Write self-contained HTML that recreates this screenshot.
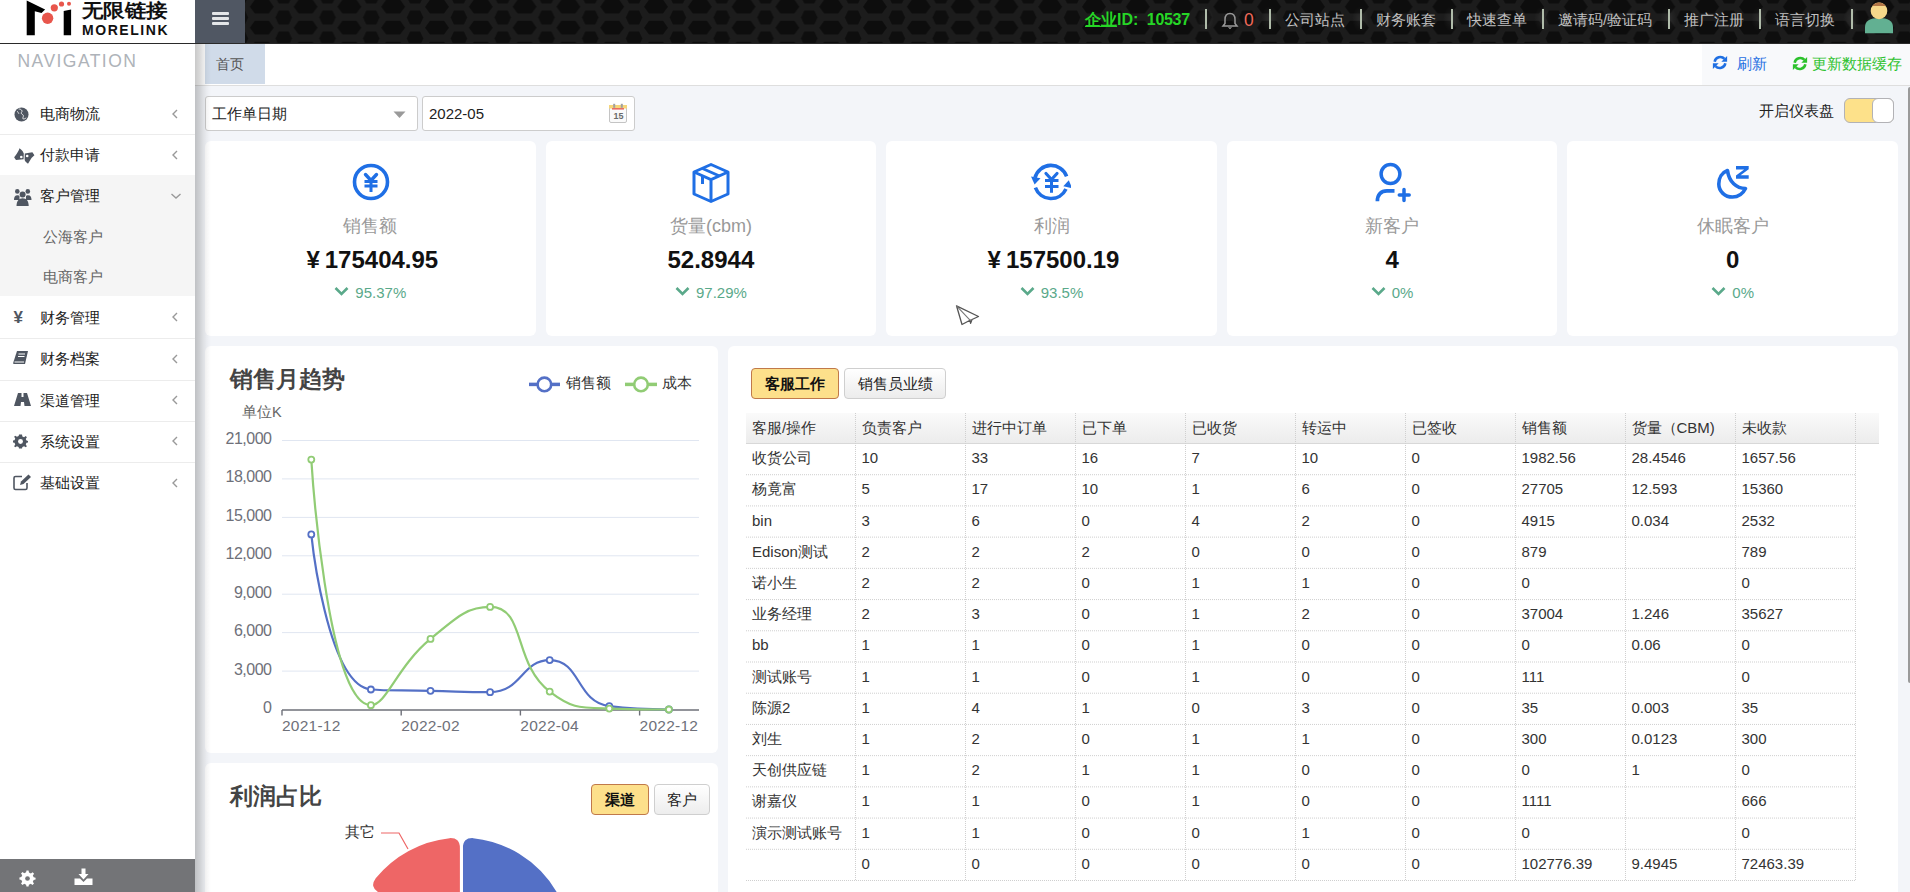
<!DOCTYPE html><html><head><meta charset="utf-8"><title>dashboard</title><style>
*{box-sizing:border-box;margin:0;padding:0}
html,body{width:1910px;height:892px;overflow:hidden}
body{font-family:"Liberation Sans",sans-serif;background:#f3f5f9;position:relative;color:#333}
.a{position:absolute}
.t{position:absolute;white-space:nowrap;line-height:1}
</style></head><body>
<div class="a" style="left:0;top:0;width:1910px;height:44px;background:#141414;border-bottom:1px solid #2a2a2a"></div>
<svg class="a" style="left:245px;top:0" width="1665" height="43">
<defs><pattern id="hx" x="-5.1" y="0" width="43.8" height="21" patternUnits="userSpaceOnUse">
<rect width="43.8" height="21" fill="#1c1c1c"/>
<polygon points="9.9,6.7 14.9,-0.3 28.9,-0.3 33.9,6.7 28.9,13.5 14.9,13.5" fill="#0d0d0d"/>
<polygon points="9.9,27.7 14.9,20.7 28.9,20.7 33.9,27.7 28.9,34.5 14.9,34.5" fill="#0d0d0d"/>
<polygon points="-8.3,17.6 -5,10.6 5,10.6 8.3,17.6 5,24.6 -5,24.6" fill="#0e0e0e"/>
<polygon points="35.5,17.6 38.8,10.6 48.8,10.6 52.1,17.6 48.8,24.6 38.8,24.6" fill="#0e0e0e"/>
<polygon points="-8.3,-3.4 -5,-10.4 5,-10.4 8.3,-3.4 5,3.6 -5,3.6" fill="#0e0e0e"/>
<polygon points="35.5,-3.4 38.8,-10.4 48.8,-10.4 52.1,-3.4 48.8,3.6 38.8,3.6" fill="#0e0e0e"/>
</pattern></defs>
<rect width="1665" height="43" fill="url(#hx)"/></svg>
<div class="a" style="left:0;top:0;width:195px;height:43px;background:#fff"></div>
<svg class="a" style="left:0;top:0" width="195" height="43">
<path d="M26.7 0.5 L45.1 9.6 L41.5 13 L34.8 11.2 L34.8 35.2 L26.7 35.2 Z" fill="#000"/>
<path d="M63.7 11 L71.1 9.4 L71.1 35.2 L63.7 35.2 Z" fill="#000"/>
<circle cx="47.6" cy="18.2" r="5.7" fill="#e8564c"/>
<circle cx="54.3" cy="7.8" r="3.6" fill="#e8564c"/>
<circle cx="61.5" cy="4" r="2.6" fill="#e8564c"/>
<circle cx="69" cy="3.8" r="2" fill="#e8564c"/>
</svg>
<div class="t" style="left:82px;top:1px;font-size:19px;font-weight:bold;color:#111;transform:scaleX(1.13);transform-origin:0 0">无限链接</div>
<div class="t" style="left:82px;top:23px;font-size:14px;font-weight:bold;color:#111;letter-spacing:1.55px">MORELINK</div>
<div class="a" style="left:195px;top:0;width:50px;height:43px;background:#505763"></div>
<div class="a" style="left:212px;top:12px;width:17px;height:3px;background:#e4e6e8;border-radius:1px"></div>
<div class="a" style="left:212px;top:17px;width:17px;height:3px;background:#e4e6e8;border-radius:1px"></div>
<div class="a" style="left:212px;top:22px;width:17px;height:3px;background:#e4e6e8;border-radius:1px"></div>
<div class="t" style="left:1085px;top:12px;font-size:16px;font-weight:bold;color:#26d626"><span style="text-decoration:underline">企业</span>ID: <span style="margin-left:4px;letter-spacing:-0.3px">10537</span></div>
<div class="a" style="left:1197px;top:6px;width:17px;height:26px;background:radial-gradient(ellipse at center,rgba(255,255,255,0.07),rgba(255,255,255,0) 70%)"></div><div class="a" style="left:1205px;top:9px;width:1.5px;height:20px;background:#b0bcaa"></div>
<div class="a" style="left:1261px;top:6px;width:17px;height:26px;background:radial-gradient(ellipse at center,rgba(255,255,255,0.07),rgba(255,255,255,0) 70%)"></div><div class="a" style="left:1269px;top:9px;width:1.5px;height:20px;background:#b0bcaa"></div>
<div class="a" style="left:1352px;top:6px;width:17px;height:26px;background:radial-gradient(ellipse at center,rgba(255,255,255,0.07),rgba(255,255,255,0) 70%)"></div><div class="a" style="left:1360px;top:9px;width:1.5px;height:20px;background:#b0bcaa"></div>
<div class="a" style="left:1443px;top:6px;width:17px;height:26px;background:radial-gradient(ellipse at center,rgba(255,255,255,0.07),rgba(255,255,255,0) 70%)"></div><div class="a" style="left:1451px;top:9px;width:1.5px;height:20px;background:#b0bcaa"></div>
<div class="a" style="left:1534px;top:6px;width:17px;height:26px;background:radial-gradient(ellipse at center,rgba(255,255,255,0.07),rgba(255,255,255,0) 70%)"></div><div class="a" style="left:1542px;top:9px;width:1.5px;height:20px;background:#b0bcaa"></div>
<div class="a" style="left:1660px;top:6px;width:17px;height:26px;background:radial-gradient(ellipse at center,rgba(255,255,255,0.07),rgba(255,255,255,0) 70%)"></div><div class="a" style="left:1668px;top:9px;width:1.5px;height:20px;background:#b0bcaa"></div>
<div class="a" style="left:1751px;top:6px;width:17px;height:26px;background:radial-gradient(ellipse at center,rgba(255,255,255,0.07),rgba(255,255,255,0) 70%)"></div><div class="a" style="left:1759px;top:9px;width:1.5px;height:20px;background:#b0bcaa"></div>
<div class="a" style="left:1843px;top:6px;width:17px;height:26px;background:radial-gradient(ellipse at center,rgba(255,255,255,0.07),rgba(255,255,255,0) 70%)"></div><div class="a" style="left:1851px;top:9px;width:1.5px;height:20px;background:#b0bcaa"></div>
<svg class="a" style="left:1220px;top:11px" width="20" height="20" viewBox="0 0 20 20">
<path d="M10 2.5 C6.5 2.5 5 5.5 5 8.5 L5 12.5 L3 15 L17 15 L15 12.5 L15 8.5 C15 5.5 13.5 2.5 10 2.5 Z" fill="none" stroke="#999" stroke-width="1.5"/>
<path d="M8.5 16.5 Q10 18.5 11.5 16.5" fill="#999" stroke="#999"/></svg>
<div class="t" style="left:1244px;top:11.5px;font-size:17.5px;color:#f06a5a">0</div>
<div class="t" style="left:1285px;top:12px;font-size:15px;color:#c0c0c0">公司站点</div>
<div class="t" style="left:1376px;top:12px;font-size:15px;color:#c0c0c0">财务账套</div>
<div class="t" style="left:1467px;top:12px;font-size:15px;color:#c0c0c0">快速查单</div>
<div class="t" style="left:1558px;top:12px;font-size:15px;color:#c0c0c0">邀请码/验证码</div>
<div class="t" style="left:1684px;top:12px;font-size:15px;color:#c0c0c0">推广注册</div>
<div class="t" style="left:1775px;top:12px;font-size:15px;color:#c0c0c0">语言切换</div>
<svg class="a" style="left:1862px;top:2px" width="34" height="33" viewBox="0 0 34 33">
<path d="M3 31.2 L3 25 C3 19 8 16 17 16 C26 16 31 19 31 25 L31 31.2 Z" fill="#62b092"/>
<circle cx="17" cy="8.9" r="8.3" fill="#f6d88a"/>
<path d="M10.3 4 A8.3 8.3 0 0 1 23.7 4 Z" fill="#b27546"/>
</svg>
<div class="a" style="left:0;top:44px;width:195px;height:848px;background:#fff"></div>
<div class="t" style="left:17.5px;top:52.5px;font-size:17.5px;color:#aeb3b9;letter-spacing:1.45px">NAVIGATION</div>
<div class="a" style="left:0;top:175px;width:195px;height:121px;background:#f5f5f5"></div>
<div class="t" style="left:40px;top:106.0px;font-size:15px;color:#222">电商物流</div>
<svg class="a" style="left:171px;top:108.5px" width="8" height="10"><path d="M6 1 L2 5 L6 9" fill="none" stroke="#999" stroke-width="1.4"/></svg>
<div class="a" style="left:0;top:134px;width:195px;height:1px;background:#ececec"></div>
<div class="t" style="left:40px;top:147.0px;font-size:15px;color:#222">付款申请</div>
<svg class="a" style="left:171px;top:149.5px" width="8" height="10"><path d="M6 1 L2 5 L6 9" fill="none" stroke="#999" stroke-width="1.4"/></svg>
<div class="t" style="left:40px;top:188.0px;font-size:15px;color:#222">客户管理</div>
<svg class="a" style="left:170px;top:191.5px" width="12" height="8"><path d="M1.5 2 L6 6 L10.5 2" fill="none" stroke="#999" stroke-width="1.4"/></svg>
<div class="t" style="left:40px;top:309.5px;font-size:15px;color:#222">财务管理</div>
<svg class="a" style="left:171px;top:312.0px" width="8" height="10"><path d="M6 1 L2 5 L6 9" fill="none" stroke="#999" stroke-width="1.4"/></svg>
<div class="a" style="left:0;top:338px;width:195px;height:1px;background:#ececec"></div>
<div class="t" style="left:40px;top:351.25px;font-size:15px;color:#222">财务档案</div>
<svg class="a" style="left:171px;top:353.75px" width="8" height="10"><path d="M6 1 L2 5 L6 9" fill="none" stroke="#999" stroke-width="1.4"/></svg>
<div class="a" style="left:0;top:379.5px;width:195px;height:1px;background:#ececec"></div>
<div class="t" style="left:40px;top:392.5px;font-size:15px;color:#222">渠道管理</div>
<svg class="a" style="left:171px;top:395.0px" width="8" height="10"><path d="M6 1 L2 5 L6 9" fill="none" stroke="#999" stroke-width="1.4"/></svg>
<div class="a" style="left:0;top:420.5px;width:195px;height:1px;background:#ececec"></div>
<div class="t" style="left:40px;top:433.75px;font-size:15px;color:#222">系统设置</div>
<svg class="a" style="left:171px;top:436.25px" width="8" height="10"><path d="M6 1 L2 5 L6 9" fill="none" stroke="#999" stroke-width="1.4"/></svg>
<div class="a" style="left:0;top:462px;width:195px;height:1px;background:#ececec"></div>
<div class="t" style="left:40px;top:475.0px;font-size:15px;color:#222">基础设置</div>
<svg class="a" style="left:171px;top:477.5px" width="8" height="10"><path d="M6 1 L2 5 L6 9" fill="none" stroke="#999" stroke-width="1.4"/></svg>
<div class="t" style="left:43px;top:229.0px;font-size:15px;color:#666">公海客户</div>
<div class="t" style="left:43px;top:269.0px;font-size:15px;color:#666">电商客户</div>
<div class="a" style="left:0;top:134px;width:195px;height:1px;background:#ececec"></div>
<svg class="a" style="left:14px;top:107px" width="15" height="15" viewBox="0 0 16 16">
<circle cx="8" cy="8" r="7.5" fill="#4f5661"/>
<path d="M5 2.2 C6.5 2 8 2.8 8.5 4 C9 5 7.5 5.5 7.8 6.8 C8.2 8 9.8 7.8 10 9.2 C10.2 10.5 9 11.5 9.5 12.5 C10.5 13 12 12.5 13 11.5" fill="none" stroke="#fff" stroke-width="0.9"/>
<path d="M3.5 4.5 C4.5 5 4.2 6.5 5.2 7.2" fill="none" stroke="#fff" stroke-width="0.9"/>
</svg>
<svg class="a" style="left:13px;top:146px" width="22" height="19" viewBox="0 0 22 19">
<path d="M1.2 11.6 C2.5 9 5 7 6.5 2.3 L8 3.5 L9.5 5 L10.8 7.6 L10.6 13.2 L3 14 Z" fill="#4f5661"/>
<path d="M11.8 7.6 L19.4 6.2 L21.4 9.3 L18.5 12 L15 17.7 L13.5 16.5 L12 15 L11.6 13.2 Z" fill="#4f5661"/>
<circle cx="8.3" cy="11" r="1.3" fill="#fff"/><circle cx="14.2" cy="10" r="1.3" fill="#fff"/>
</svg>
<svg class="a" style="left:13px;top:188px" width="20" height="20" viewBox="0 0 20 20">
<circle cx="4.3" cy="3.4" r="2.3" fill="#4f5661"/><circle cx="14.8" cy="3.4" r="2.3" fill="#4f5661"/>
<circle cx="9.6" cy="6.5" r="3" fill="#4f5661"/>
<path d="M1 12 C1 9 2 7.2 4.5 7.2 C5.5 7.2 6 7.6 6.5 8 L6.5 12 Z" fill="#4f5661"/>
<path d="M18.5 12 C18.5 9 17.5 7.2 15 7.2 C14 7.2 13.5 7.6 13 8 L13 12 Z" fill="#4f5661"/>
<path d="M3.5 18 C3.5 13 6 10.3 9.7 10.3 C13.4 10.3 15.7 13 15.7 18 Z" fill="#4f5661"/>
</svg>
<div class="t" style="left:13.5px;top:309px;font-size:17px;font-weight:bold;color:#4f5661">¥</div>
<svg class="a" style="left:13px;top:350px" width="16" height="15" viewBox="0 0 16 15">
<path d="M4 1 L15 1 L12 14 L1 14 C0.5 14 0 13.5 0.3 12.5 Z" fill="#4f5661"/>
<path d="M5.5 4 L12 4 M5 6.5 L11.5 6.5" stroke="#fff" stroke-width="1.2"/>
<path d="M1.5 12 L11 12" stroke="#fff" stroke-width="1"/>
</svg>
<svg class="a" style="left:14px;top:393px" width="17" height="14" viewBox="0 0 17 14">
<path d="M4 0 L7.5 0 L7.5 4 L9.5 4 L9.5 0 L13 0 L17 13 L10.5 13 L10 9 L7 9 L6.5 13 L0 13 Z" fill="#4f5661"/>
</svg>
<svg class="a" style="left:13px;top:434px" width="15" height="15" viewBox="0 0 16 16">
<path d="M8 0.5 L9.6 0.5 L10 2.6 L11.8 3.4 L13.6 2.2 L14.8 3.4 L13.6 5.2 L14.4 7 L16 7.4 L16 9 L14.4 9.4 L13.6 11.2 L14.8 13 L13.6 14.2 L11.8 13 L10 13.8 L9.6 15.5 L6.4 15.5 L6 13.8 L4.2 13 L2.4 14.2 L1.2 13 L2.4 11.2 L1.6 9.4 L0 9 L0 7 L1.6 6.6 L2.4 4.8 L1.2 3 L2.4 1.8 L4.2 3 L6 2.2 L6.4 0.5 Z" fill="#4f5661"/>
<circle cx="8" cy="8" r="2.6" fill="#fff"/></svg>
<svg class="a" style="left:13px;top:474px" width="19" height="17" viewBox="0 0 19 17">
<path d="M9 2.5 L2.5 2.5 C1.5 2.5 1 3 1 4 L1 14 C1 15 1.5 15.5 2.5 15.5 L12.5 15.5 C13.5 15.5 14 15 14 14 L14 9" fill="none" stroke="#4f5661" stroke-width="1.6"/>
<path d="M7 11 L8 7.5 L15.5 0.5 L18 3 L10.5 10 Z" fill="#4f5661"/>
</svg>
<div class="a" style="left:0;top:859px;width:195px;height:33px;background:#737477"></div>
<svg class="a" style="left:19px;top:870px" width="17" height="17" viewBox="0 0 16 16">
<path d="M7 0.5 L9 0.5 L9.4 2.4 L11.2 3.2 L12.8 2.1 L14.2 3.5 L13 5.1 L13.8 6.9 L15.6 7.2 L15.6 9 L13.8 9.3 L13 11.1 L14.1 12.7 L12.7 14.1 L11.1 13 L9.3 13.8 L9 15.6 L7 15.6 L6.7 13.8 L4.9 13 L3.3 14.1 L1.9 12.7 L3 11.1 L2.2 9.3 L0.4 9 L0.4 7 L2.2 6.7 L3 4.9 L1.9 3.3 L3.3 1.9 L4.9 3 L6.7 2.2 Z" fill="#fff"/>
<circle cx="8" cy="8" r="2.2" fill="#737477"/></svg>
<svg class="a" style="left:74px;top:868px" width="19" height="18" viewBox="0 0 19 18">
<path d="M7.5 0.5 L11.5 0.5 L11.5 6 L14.5 6 L9.5 11.5 L4.5 6 L7.5 6 Z" fill="#fff"/>
<path d="M0.5 10.5 L6 10.5 L9.5 14 L13 10.5 L18.5 10.5 L18.5 17 L0.5 17 Z" fill="#fff"/>
</svg>
<div class="a" style="left:195px;top:44px;width:1715px;height:42px;background:#fff;border-bottom:1px solid #dedede"></div>
<div class="a" style="left:1702px;top:44px;width:208px;height:41px;background:#f8f9fb"></div>
<div class="a" style="left:205px;top:44px;width:60px;height:40px;background:#d0dbe9"></div>
<div class="t" style="left:216px;top:57px;font-size:14px;color:#555">首页</div>
<svg class="a" style="left:1712px;top:55px" width="16" height="15" viewBox="0 0 16 16">
<path d="M2.3 7.2 A6 6 0 0 1 12.8 4.2" fill="none" stroke="#1f6fe2" stroke-width="2.7"/>
<path d="M15.6 1 L15.6 7.2 L9.4 7.2 Z" fill="#1f6fe2"/>
<path d="M13.7 8.8 A6 6 0 0 1 3.2 11.8" fill="none" stroke="#1f6fe2" stroke-width="2.7"/>
<path d="M0.4 15 L0.4 8.8 L6.6 8.8 Z" fill="#1f6fe2"/></svg>
<div class="t" style="left:1737px;top:56px;font-size:15px;color:#1f6fe2">刷新</div>
<svg class="a" style="left:1792px;top:56px" width="16" height="15" viewBox="0 0 16 16">
<path d="M2.3 7.2 A6 6 0 0 1 12.8 4.2" fill="none" stroke="#2cc12c" stroke-width="2.7"/>
<path d="M15.6 1 L15.6 7.2 L9.4 7.2 Z" fill="#2cc12c"/>
<path d="M13.7 8.8 A6 6 0 0 1 3.2 11.8" fill="none" stroke="#2cc12c" stroke-width="2.7"/>
<path d="M0.4 15 L0.4 8.8 L6.6 8.8 Z" fill="#2cc12c"/></svg>
<div class="t" style="left:1812px;top:56px;font-size:15px;color:#2fc22f">更新数据缓存</div>
<div class="a" style="left:1908px;top:87px;width:4px;height:596px;background:#9a9a9a;border-radius:3px"></div>
<div class="a" style="left:205px;top:96px;width:213px;height:35px;background:#fff;border:1px solid #ccc;border-radius:3px"></div>
<div class="t" style="left:212px;top:106px;font-size:15px;color:#222">工作单日期</div>
<svg class="a" style="left:393px;top:111px" width="13" height="8"><path d="M0.5 0.5 L12.5 0.5 L6.5 7 Z" fill="#9a9a9a"/></svg>
<div class="a" style="left:422px;top:96px;width:213px;height:35px;background:#fff;border:1px solid #ccc;border-radius:3px"></div>
<div class="t" style="left:429px;top:106px;font-size:15px;color:#222">2022-05</div>
<svg class="a" style="left:609px;top:103px" width="19" height="21" viewBox="0 0 19 21">
<rect x="0.5" y="2.5" width="17" height="17" rx="1.5" fill="#fafafa" stroke="#c4c4c4"/>
<rect x="0" y="2" width="18" height="3.5" fill="#f6d67a"/>
<rect x="3" y="5.2" width="12" height="1.3" fill="#e8504a"/>
<rect x="4.2" y="0.8" width="2" height="4" fill="#a0a0a0"/><rect x="11.8" y="0.8" width="2" height="4" fill="#a0a0a0"/>
<text x="4.6" y="15.5" font-size="9" font-weight="bold" font-family="Liberation Sans" fill="#6a6a6a">15</text></svg>
<div class="t" style="left:1759px;top:103px;font-size:15px;color:#222">开启仪表盘</div>
<div class="a" style="left:1844px;top:98px;width:50px;height:25px;background:#fde18a;border:1px solid #b2b2b6;border-radius:6px"></div>
<div class="a" style="left:1872px;top:98px;width:22px;height:25px;background:#fff;border:1px solid #b2b2b6;border-radius:6px"></div>
<div class="a" style="left:205.00px;top:141px;width:330.60px;height:195px;background:#fff;border-radius:6px"></div>
<svg class="a" style="left:350.5px;top:162px" width="40" height="42" viewBox="0 0 40 42"><circle cx="20" cy="20" r="16.5" fill="none" stroke="#1f6fe5" stroke-width="3.6"/>
 <path d="M14.5 12.5 L20 18.5 L25.5 12.5" fill="none" stroke="#1f6fe5" stroke-width="3.4" stroke-linecap="round"/>
 <path d="M13.5 19.5 L26.5 19.5 M13.5 24 L26.5 24 M20 18 L20 30" stroke="#1f6fe5" stroke-width="3"/></svg>
<div class="t" style="left:220.30px;width:300px;text-align:center;top:217px;font-size:18px;color:#999">销售额</div>
<div class="t" style="left:222.30px;width:300px;text-align:center;top:248px;font-size:24px;font-weight:bold;color:#111"><span style="margin-right:5px">¥</span>175404.95</div>
<div class="t" style="left:220.30px;width:300px;text-align:center;top:285px;font-size:15px;color:#5aa98a"><svg width="15" height="10" style="vertical-align:top;margin-right:6px;margin-top:1px"><path d="M1.5 2 L7.5 8 L13.5 2" fill="none" stroke="#5aa98a" stroke-width="2.6"/></svg>95.37%</div>
<div class="a" style="left:545.60px;top:141px;width:330.60px;height:195px;background:#fff;border-radius:6px"></div>
<svg class="a" style="left:690.5px;top:162px" width="40" height="42" viewBox="0 0 40 42"><path d="M20 2.5 L37 10 L37 32 L20 39.5 L3 32 L3 10 Z" fill="none" stroke="#1f6fe5" stroke-width="3" stroke-linejoin="round"/>
 <path d="M3 10 L20 17.5 L37 10 M20 17.5 L20 39.5" fill="none" stroke="#1f6fe5" stroke-width="3"/>
 <path d="M11.5 6.5 L28.5 14 M11.5 14 L11.5 22" fill="none" stroke="#1f6fe5" stroke-width="3"/></svg>
<div class="t" style="left:560.90px;width:300px;text-align:center;top:217px;font-size:18px;color:#999">货量(cbm)</div>
<div class="t" style="left:560.90px;width:300px;text-align:center;top:248px;font-size:24px;font-weight:bold;color:#111">52.8944</div>
<div class="t" style="left:560.90px;width:300px;text-align:center;top:285px;font-size:15px;color:#5aa98a"><svg width="15" height="10" style="vertical-align:top;margin-right:6px;margin-top:1px"><path d="M1.5 2 L7.5 8 L13.5 2" fill="none" stroke="#5aa98a" stroke-width="2.6"/></svg>97.29%</div>
<div class="a" style="left:886.20px;top:141px;width:330.60px;height:195px;background:#fff;border-radius:6px"></div>
<svg class="a" style="left:1031px;top:162px" width="40" height="42" viewBox="0 0 40 42"><path d="M3.97 15.7 A16.6 16.6 0 0 1 35.6 14.3" fill="none" stroke="#1f6fe5" stroke-width="3.6"/>
 <path d="M0 14.5 L9.5 16.3 L3.6 22.5 Z" fill="#1f6fe5"/>
 <path d="M35 27 A16.6 16.6 0 0 1 4.4 25.7" fill="none" stroke="#1f6fe5" stroke-width="3.6"/>
 <path d="M37.8 18.3 L41.2 26.3 L32.3 24.2 Z" fill="#1f6fe5"/>
 <path d="M15 11.5 L20.5 17.5 L26 11.5" fill="none" stroke="#1f6fe5" stroke-width="3.2" stroke-linecap="round"/>
 <path d="M14 18.5 L27.5 18.5 M14 24.4 L27.5 24.4 M20.5 17 L20.5 30.8" stroke="#1f6fe5" stroke-width="3"/></svg>
<div class="t" style="left:901.50px;width:300px;text-align:center;top:217px;font-size:18px;color:#999">利润</div>
<div class="t" style="left:903.50px;width:300px;text-align:center;top:248px;font-size:24px;font-weight:bold;color:#111"><span style="margin-right:5px">¥</span>157500.19</div>
<div class="t" style="left:901.50px;width:300px;text-align:center;top:285px;font-size:15px;color:#5aa98a"><svg width="15" height="10" style="vertical-align:top;margin-right:6px;margin-top:1px"><path d="M1.5 2 L7.5 8 L13.5 2" fill="none" stroke="#5aa98a" stroke-width="2.6"/></svg>93.5%</div>
<div class="a" style="left:1226.80px;top:141px;width:330.60px;height:195px;background:#fff;border-radius:6px"></div>
<svg class="a" style="left:1371.5px;top:162px" width="40" height="42" viewBox="0 0 40 42"><circle cx="18.5" cy="12" r="9.4" fill="none" stroke="#1f6fe5" stroke-width="3.5"/>
 <path d="M5.4 39.2 C5.4 32.5 9 28.8 15 28.8 L22.5 28.8" fill="none" stroke="#1f6fe5" stroke-width="3.7"/>
 <path d="M27.3 33 L37.2 33 M32 27.5 L32 38.5" stroke="#1f6fe5" stroke-width="3.5" stroke-linecap="round"/></svg>
<div class="t" style="left:1242.10px;width:300px;text-align:center;top:217px;font-size:18px;color:#999">新客户</div>
<div class="t" style="left:1242.10px;width:300px;text-align:center;top:248px;font-size:24px;font-weight:bold;color:#111">4</div>
<div class="t" style="left:1242.10px;width:300px;text-align:center;top:285px;font-size:15px;color:#5aa98a"><svg width="15" height="10" style="vertical-align:top;margin-right:6px;margin-top:1px"><path d="M1.5 2 L7.5 8 L13.5 2" fill="none" stroke="#5aa98a" stroke-width="2.6"/></svg>0%</div>
<div class="a" style="left:1567.40px;top:141px;width:330.60px;height:195px;background:#fff;border-radius:6px"></div>
<svg class="a" style="left:1712px;top:162px" width="40" height="42" viewBox="0 0 40 42"><path d="M15.5 8.5 C10 10.5 6.8 16 6.8 22 C6.8 29.5 13 35 20.5 35 C26 35 31 31.5 33.5 26.5 C24.5 26.5 17 20 15.5 8.5 Z" fill="none" stroke="#1f6fe5" stroke-width="3.6" stroke-linejoin="round"/>
 <path d="M24 4 L36.7 4 L36.7 7.3 L28.6 13.3 L36.7 13.3 L36.7 16.7 L24 16.7 L24 13.5 L32.1 7.5 L24 7.5 Z" fill="#1f6fe5"/></svg>
<div class="t" style="left:1582.70px;width:300px;text-align:center;top:217px;font-size:18px;color:#999">休眠客户</div>
<div class="t" style="left:1582.70px;width:300px;text-align:center;top:248px;font-size:24px;font-weight:bold;color:#111">0</div>
<div class="t" style="left:1582.70px;width:300px;text-align:center;top:285px;font-size:15px;color:#5aa98a"><svg width="15" height="10" style="vertical-align:top;margin-right:6px;margin-top:1px"><path d="M1.5 2 L7.5 8 L13.5 2" fill="none" stroke="#5aa98a" stroke-width="2.6"/></svg>0%</div>
<svg class="a" style="left:955px;top:305px" width="25" height="22" viewBox="0 0 25 22">
<path d="M1.5 0.8 L23.5 11.5 L17 14.5 L15.6 18.3 L15 15.2 L7 19.5 Z" fill="#fff" stroke="#555" stroke-width="1.3" stroke-linejoin="round"/>
<path d="M1.5 0.8 L15 15.2 L17 14.5" fill="none" stroke="#777" stroke-width="1.1"/></svg>
<div class="a" style="left:205px;top:346px;width:513px;height:407px;background:#fff;border-radius:6px"></div>
<div class="t" style="left:230px;top:368.5px;font-size:22.5px;font-weight:bold;color:#444">销售月趋势</div>
<svg class="a" style="left:520px;top:370px" width="190" height="30">
<path d="M9 14.4 L40 14.4" stroke="#5470c6" stroke-width="3.5"/>
<circle cx="24.4" cy="14.4" r="6.8" fill="#fff" stroke="#5470c6" stroke-width="2.6"/>
<path d="M105 14.4 L137 14.4" stroke="#91cc75" stroke-width="3.5"/>
<circle cx="121" cy="14.4" r="6.8" fill="#fff" stroke="#91cc75" stroke-width="2.6"/>
</svg>
<div class="t" style="left:566px;top:375px;font-size:15px;color:#333">销售额</div>
<div class="t" style="left:662px;top:375px;font-size:15px;color:#333">成本</div>
<div class="t" style="left:242px;top:405px;font-size:14.5px;color:#666">单位K</div>
<svg class="a" style="left:0;top:0" width="1910" height="892"><path d="M282 440.5 L699 440.5" stroke="#e0e6f1" stroke-width="1"/><path d="M282 478.9 L699 478.9" stroke="#e0e6f1" stroke-width="1"/><path d="M282 517.4 L699 517.4" stroke="#e0e6f1" stroke-width="1"/><path d="M282 555.8 L699 555.8" stroke="#e0e6f1" stroke-width="1"/><path d="M282 594.2 L699 594.2" stroke="#e0e6f1" stroke-width="1"/><path d="M282 632.6 L699 632.6" stroke="#e0e6f1" stroke-width="1"/><path d="M282 671.1 L699 671.1" stroke="#e0e6f1" stroke-width="1"/><path d="M282 710 L699 710" stroke="#6e7079" stroke-width="1.6"/><path d="M282 710 L282 715.5" stroke="#6e7079" stroke-width="1.4"/><path d="M401.2 710 L401.2 715.5" stroke="#6e7079" stroke-width="1.4"/><path d="M520.4 710 L520.4 715.5" stroke="#6e7079" stroke-width="1.4"/><path d="M639.6 710 L639.6 715.5" stroke="#6e7079" stroke-width="1.4"/><path d="M311.30 534.40 C311.30 534.40 327.04 685.88 370.90 689.50 C386.64 690.80 400.70 690.13 430.50 690.80 C460.30 691.48 462.19 692.20 490.10 692.20 C521.79 692.20 521.49 660.10 549.70 660.10 C581.09 660.10 576.04 702.03 609.30 706.20 C635.64 709.50 668.90 709.50 668.90 709.50" fill="none" stroke="#5470c6" stroke-width="2.2"/><circle cx="311.3" cy="534.4" r="3" fill="#fff" stroke="#5470c6" stroke-width="1.8"/><circle cx="370.9" cy="689.5" r="3" fill="#fff" stroke="#5470c6" stroke-width="1.8"/><circle cx="430.5" cy="690.8" r="3" fill="#fff" stroke="#5470c6" stroke-width="1.8"/><circle cx="490.1" cy="692.2" r="3" fill="#fff" stroke="#5470c6" stroke-width="1.8"/><circle cx="549.7" cy="660.1" r="3" fill="#fff" stroke="#5470c6" stroke-width="1.8"/><circle cx="609.3" cy="706.2" r="3" fill="#fff" stroke="#5470c6" stroke-width="1.8"/><circle cx="668.9" cy="709.5" r="3" fill="#fff" stroke="#5470c6" stroke-width="1.8"/><path d="M311.30 459.60 C311.30 459.60 326.84 705.20 370.90 705.20 C386.44 705.20 396.61 666.85 430.50 638.90 C456.21 617.70 466.55 606.90 490.10 606.90 C526.15 606.90 512.41 663.19 549.70 691.60 C572.01 708.60 578.92 707.66 609.30 708.60 C638.52 709.50 668.90 709.50 668.90 709.50" fill="none" stroke="#91cc75" stroke-width="2.2"/><circle cx="311.3" cy="459.6" r="3" fill="#fff" stroke="#91cc75" stroke-width="1.8"/><circle cx="370.9" cy="705.2" r="3" fill="#fff" stroke="#91cc75" stroke-width="1.8"/><circle cx="430.5" cy="638.9" r="3" fill="#fff" stroke="#91cc75" stroke-width="1.8"/><circle cx="490.1" cy="606.9" r="3" fill="#fff" stroke="#91cc75" stroke-width="1.8"/><circle cx="549.7" cy="691.6" r="3" fill="#fff" stroke="#91cc75" stroke-width="1.8"/><circle cx="609.3" cy="708.6" r="3" fill="#fff" stroke="#91cc75" stroke-width="1.8"/><circle cx="668.9" cy="709.5" r="3" fill="#fff" stroke="#91cc75" stroke-width="1.8"/></svg>
<div class="t" style="left:171.5px;width:100px;text-align:right;top:431.0px;font-size:16px;letter-spacing:-0.5px;color:#6e7079">21,000</div>
<div class="t" style="left:171.5px;width:100px;text-align:right;top:469.4px;font-size:16px;letter-spacing:-0.5px;color:#6e7079">18,000</div>
<div class="t" style="left:171.5px;width:100px;text-align:right;top:507.9px;font-size:16px;letter-spacing:-0.5px;color:#6e7079">15,000</div>
<div class="t" style="left:171.5px;width:100px;text-align:right;top:546.3px;font-size:16px;letter-spacing:-0.5px;color:#6e7079">12,000</div>
<div class="t" style="left:171.5px;width:100px;text-align:right;top:584.7px;font-size:16px;letter-spacing:-0.5px;color:#6e7079">9,000</div>
<div class="t" style="left:171.5px;width:100px;text-align:right;top:623.1px;font-size:16px;letter-spacing:-0.5px;color:#6e7079">6,000</div>
<div class="t" style="left:171.5px;width:100px;text-align:right;top:661.6px;font-size:16px;letter-spacing:-0.5px;color:#6e7079">3,000</div>
<div class="t" style="left:171.5px;width:100px;text-align:right;top:700.0px;font-size:16px;letter-spacing:-0.5px;color:#6e7079">0</div>
<div class="t" style="left:261.3px;width:100px;text-align:center;top:718px;font-size:15.5px;letter-spacing:0.25px;color:#6e7079">2021-12</div>
<div class="t" style="left:380.5px;width:100px;text-align:center;top:718px;font-size:15.5px;letter-spacing:0.25px;color:#6e7079">2022-02</div>
<div class="t" style="left:499.7px;width:100px;text-align:center;top:718px;font-size:15.5px;letter-spacing:0.25px;color:#6e7079">2022-04</div>
<div class="t" style="left:618.9px;width:100px;text-align:center;top:718px;font-size:15.5px;letter-spacing:0.25px;color:#6e7079">2022-12</div>
<div class="a" style="left:205px;top:763px;width:513px;height:140px;background:#fff;border-radius:6px"></div>
<div class="t" style="left:230px;top:785.5px;font-size:22.5px;font-weight:bold;color:#444">利润占比</div>
<div class="a" style="left:591px;top:784px;width:58px;height:31px;background:#fde08b;border:1px solid #c0794a;border-radius:4px"></div>
<div class="t" style="left:605px;top:792px;font-size:15px;font-weight:bold;color:#111">渠道</div>
<div class="a" style="left:654px;top:784px;width:56px;height:31px;background:linear-gradient(#fff,#ededed);border:1px solid #cfcfcf;border-radius:4px"></div>
<div class="t" style="left:667px;top:792px;font-size:15px;color:#222">客户</div>
<svg class="a" style="left:0;top:0" width="1910" height="892">
<path d="M461.4 948 L461.40 848.00 Q461.40 836.00 473.38 836.64 A112 112 0 0 1 563.83 993.31 Q558.39 1004.00 548.00 998.00 Z" fill="#5470c6" stroke="#fff" stroke-width="3" stroke-linejoin="round"/>
<path d="M461.4 948 L377.53 893.54 Q367.47 887.00 374.53 877.31 A112 112 0 0 1 449.42 836.64 Q461.40 836.00 461.40 848.00 Z" fill="#ee6666" stroke="#fff" stroke-width="3" stroke-linejoin="round"/>
<path d="M381 833 L399 833 L408 849" fill="none" stroke="#ee6666" stroke-width="1.2"/>
</svg>
<div class="t" style="left:345px;top:824.5px;font-size:14.5px;color:#333">其它</div>
<div class="a" style="left:728px;top:346px;width:1170px;height:560px;background:#fff;border-radius:6px"></div>
<div class="a" style="left:751px;top:368px;width:88px;height:31px;background:#fde08b;border:1px solid #c0794a;border-radius:4px"></div>
<div class="t" style="left:765px;top:376px;font-size:15px;font-weight:bold;color:#111">客服工作</div>
<div class="a" style="left:844px;top:368px;width:102px;height:31px;background:linear-gradient(#fff,#ececec);border:1px solid #cfcfcf;border-radius:4px"></div>
<div class="t" style="left:858px;top:376px;font-size:15px;color:#222">销售员业绩</div>
<div class="a" style="left:746px;top:413px;width:1133px;height:31px;background:linear-gradient(#fafafa,#ececec);border-bottom:1px solid #d8d8d8"></div>
<div class="t" style="left:752.0px;top:420px;font-size:15px;color:#333">客服/操作</div>
<div class="t" style="left:861.5px;top:420px;font-size:15px;color:#333">负责客户</div>
<div class="t" style="left:971.5px;top:420px;font-size:15px;color:#333">进行中订单</div>
<div class="t" style="left:1081.5px;top:420px;font-size:15px;color:#333">已下单</div>
<div class="t" style="left:1191.5px;top:420px;font-size:15px;color:#333">已收货</div>
<div class="t" style="left:1301.5px;top:420px;font-size:15px;color:#333">转运中</div>
<div class="t" style="left:1411.5px;top:420px;font-size:15px;color:#333">已签收</div>
<div class="t" style="left:1521.5px;top:420px;font-size:15px;color:#333">销售额</div>
<div class="t" style="left:1631.5px;top:420px;font-size:15px;color:#333">货量（CBM)</div>
<div class="t" style="left:1741.5px;top:420px;font-size:15px;color:#333">未收款</div>
<svg class="a" style="left:0;top:0" width="1910" height="892"><path d="M855.5 413 L855.5 880.5" stroke="#cfcfcf" stroke-width="1" stroke-dasharray="1 1"/><path d="M965.5 413 L965.5 880.5" stroke="#cfcfcf" stroke-width="1" stroke-dasharray="1 1"/><path d="M1075.5 413 L1075.5 880.5" stroke="#cfcfcf" stroke-width="1" stroke-dasharray="1 1"/><path d="M1185.5 413 L1185.5 880.5" stroke="#cfcfcf" stroke-width="1" stroke-dasharray="1 1"/><path d="M1295.5 413 L1295.5 880.5" stroke="#cfcfcf" stroke-width="1" stroke-dasharray="1 1"/><path d="M1405.5 413 L1405.5 880.5" stroke="#cfcfcf" stroke-width="1" stroke-dasharray="1 1"/><path d="M1515.5 413 L1515.5 880.5" stroke="#cfcfcf" stroke-width="1" stroke-dasharray="1 1"/><path d="M1625.5 413 L1625.5 880.5" stroke="#cfcfcf" stroke-width="1" stroke-dasharray="1 1"/><path d="M1735.5 413 L1735.5 880.5" stroke="#cfcfcf" stroke-width="1" stroke-dasharray="1 1"/><path d="M1855.5 413 L1855.5 880.5" stroke="#cfcfcf" stroke-width="1" stroke-dasharray="1 1"/><path d="M746 474.71 L1855.5 474.71" stroke="#cfcfcf" stroke-width="1" stroke-dasharray="1 1"/><path d="M746 505.93 L1855.5 505.93" stroke="#cfcfcf" stroke-width="1" stroke-dasharray="1 1"/><path d="M746 537.14 L1855.5 537.14" stroke="#cfcfcf" stroke-width="1" stroke-dasharray="1 1"/><path d="M746 568.36 L1855.5 568.36" stroke="#cfcfcf" stroke-width="1" stroke-dasharray="1 1"/><path d="M746 599.57 L1855.5 599.57" stroke="#cfcfcf" stroke-width="1" stroke-dasharray="1 1"/><path d="M746 630.79 L1855.5 630.79" stroke="#cfcfcf" stroke-width="1" stroke-dasharray="1 1"/><path d="M746 662.00 L1855.5 662.00" stroke="#cfcfcf" stroke-width="1" stroke-dasharray="1 1"/><path d="M746 693.21 L1855.5 693.21" stroke="#cfcfcf" stroke-width="1" stroke-dasharray="1 1"/><path d="M746 724.43 L1855.5 724.43" stroke="#cfcfcf" stroke-width="1" stroke-dasharray="1 1"/><path d="M746 755.64 L1855.5 755.64" stroke="#cfcfcf" stroke-width="1" stroke-dasharray="1 1"/><path d="M746 786.86 L1855.5 786.86" stroke="#cfcfcf" stroke-width="1" stroke-dasharray="1 1"/><path d="M746 818.07 L1855.5 818.07" stroke="#cfcfcf" stroke-width="1" stroke-dasharray="1 1"/><path d="M746 849.29 L1855.5 849.29" stroke="#cfcfcf" stroke-width="1" stroke-dasharray="1 1"/><path d="M746 880.50 L1855.5 880.50" stroke="#cfcfcf" stroke-width="1" stroke-dasharray="1 1"/></svg>
<div class="t" style="left:752.0px;top:450.11px;font-size:15px;color:#333">收货公司</div>
<div class="t" style="left:861.5px;top:450.11px;font-size:15px;color:#333">10</div>
<div class="t" style="left:971.5px;top:450.11px;font-size:15px;color:#333">33</div>
<div class="t" style="left:1081.5px;top:450.11px;font-size:15px;color:#333">16</div>
<div class="t" style="left:1191.5px;top:450.11px;font-size:15px;color:#333">7</div>
<div class="t" style="left:1301.5px;top:450.11px;font-size:15px;color:#333">10</div>
<div class="t" style="left:1411.5px;top:450.11px;font-size:15px;color:#333">0</div>
<div class="t" style="left:1521.5px;top:450.11px;font-size:15px;color:#333">1982.56</div>
<div class="t" style="left:1631.5px;top:450.11px;font-size:15px;color:#333">28.4546</div>
<div class="t" style="left:1741.5px;top:450.11px;font-size:15px;color:#333">1657.56</div>
<div class="t" style="left:752.0px;top:481.32px;font-size:15px;color:#333">杨竟富</div>
<div class="t" style="left:861.5px;top:481.32px;font-size:15px;color:#333">5</div>
<div class="t" style="left:971.5px;top:481.32px;font-size:15px;color:#333">17</div>
<div class="t" style="left:1081.5px;top:481.32px;font-size:15px;color:#333">10</div>
<div class="t" style="left:1191.5px;top:481.32px;font-size:15px;color:#333">1</div>
<div class="t" style="left:1301.5px;top:481.32px;font-size:15px;color:#333">6</div>
<div class="t" style="left:1411.5px;top:481.32px;font-size:15px;color:#333">0</div>
<div class="t" style="left:1521.5px;top:481.32px;font-size:15px;color:#333">27705</div>
<div class="t" style="left:1631.5px;top:481.32px;font-size:15px;color:#333">12.593</div>
<div class="t" style="left:1741.5px;top:481.32px;font-size:15px;color:#333">15360</div>
<div class="t" style="left:752.0px;top:512.54px;font-size:15px;color:#333">bin</div>
<div class="t" style="left:861.5px;top:512.54px;font-size:15px;color:#333">3</div>
<div class="t" style="left:971.5px;top:512.54px;font-size:15px;color:#333">6</div>
<div class="t" style="left:1081.5px;top:512.54px;font-size:15px;color:#333">0</div>
<div class="t" style="left:1191.5px;top:512.54px;font-size:15px;color:#333">4</div>
<div class="t" style="left:1301.5px;top:512.54px;font-size:15px;color:#333">2</div>
<div class="t" style="left:1411.5px;top:512.54px;font-size:15px;color:#333">0</div>
<div class="t" style="left:1521.5px;top:512.54px;font-size:15px;color:#333">4915</div>
<div class="t" style="left:1631.5px;top:512.54px;font-size:15px;color:#333">0.034</div>
<div class="t" style="left:1741.5px;top:512.54px;font-size:15px;color:#333">2532</div>
<div class="t" style="left:752.0px;top:543.75px;font-size:15px;color:#333">Edison测试</div>
<div class="t" style="left:861.5px;top:543.75px;font-size:15px;color:#333">2</div>
<div class="t" style="left:971.5px;top:543.75px;font-size:15px;color:#333">2</div>
<div class="t" style="left:1081.5px;top:543.75px;font-size:15px;color:#333">2</div>
<div class="t" style="left:1191.5px;top:543.75px;font-size:15px;color:#333">0</div>
<div class="t" style="left:1301.5px;top:543.75px;font-size:15px;color:#333">0</div>
<div class="t" style="left:1411.5px;top:543.75px;font-size:15px;color:#333">0</div>
<div class="t" style="left:1521.5px;top:543.75px;font-size:15px;color:#333">879</div>
<div class="t" style="left:1741.5px;top:543.75px;font-size:15px;color:#333">789</div>
<div class="t" style="left:752.0px;top:574.96px;font-size:15px;color:#333">诺小生</div>
<div class="t" style="left:861.5px;top:574.96px;font-size:15px;color:#333">2</div>
<div class="t" style="left:971.5px;top:574.96px;font-size:15px;color:#333">2</div>
<div class="t" style="left:1081.5px;top:574.96px;font-size:15px;color:#333">0</div>
<div class="t" style="left:1191.5px;top:574.96px;font-size:15px;color:#333">1</div>
<div class="t" style="left:1301.5px;top:574.96px;font-size:15px;color:#333">1</div>
<div class="t" style="left:1411.5px;top:574.96px;font-size:15px;color:#333">0</div>
<div class="t" style="left:1521.5px;top:574.96px;font-size:15px;color:#333">0</div>
<div class="t" style="left:1741.5px;top:574.96px;font-size:15px;color:#333">0</div>
<div class="t" style="left:752.0px;top:606.18px;font-size:15px;color:#333">业务经理</div>
<div class="t" style="left:861.5px;top:606.18px;font-size:15px;color:#333">2</div>
<div class="t" style="left:971.5px;top:606.18px;font-size:15px;color:#333">3</div>
<div class="t" style="left:1081.5px;top:606.18px;font-size:15px;color:#333">0</div>
<div class="t" style="left:1191.5px;top:606.18px;font-size:15px;color:#333">1</div>
<div class="t" style="left:1301.5px;top:606.18px;font-size:15px;color:#333">2</div>
<div class="t" style="left:1411.5px;top:606.18px;font-size:15px;color:#333">0</div>
<div class="t" style="left:1521.5px;top:606.18px;font-size:15px;color:#333">37004</div>
<div class="t" style="left:1631.5px;top:606.18px;font-size:15px;color:#333">1.246</div>
<div class="t" style="left:1741.5px;top:606.18px;font-size:15px;color:#333">35627</div>
<div class="t" style="left:752.0px;top:637.39px;font-size:15px;color:#333">bb</div>
<div class="t" style="left:861.5px;top:637.39px;font-size:15px;color:#333">1</div>
<div class="t" style="left:971.5px;top:637.39px;font-size:15px;color:#333">1</div>
<div class="t" style="left:1081.5px;top:637.39px;font-size:15px;color:#333">0</div>
<div class="t" style="left:1191.5px;top:637.39px;font-size:15px;color:#333">1</div>
<div class="t" style="left:1301.5px;top:637.39px;font-size:15px;color:#333">0</div>
<div class="t" style="left:1411.5px;top:637.39px;font-size:15px;color:#333">0</div>
<div class="t" style="left:1521.5px;top:637.39px;font-size:15px;color:#333">0</div>
<div class="t" style="left:1631.5px;top:637.39px;font-size:15px;color:#333">0.06</div>
<div class="t" style="left:1741.5px;top:637.39px;font-size:15px;color:#333">0</div>
<div class="t" style="left:752.0px;top:668.61px;font-size:15px;color:#333">测试账号</div>
<div class="t" style="left:861.5px;top:668.61px;font-size:15px;color:#333">1</div>
<div class="t" style="left:971.5px;top:668.61px;font-size:15px;color:#333">1</div>
<div class="t" style="left:1081.5px;top:668.61px;font-size:15px;color:#333">0</div>
<div class="t" style="left:1191.5px;top:668.61px;font-size:15px;color:#333">1</div>
<div class="t" style="left:1301.5px;top:668.61px;font-size:15px;color:#333">0</div>
<div class="t" style="left:1411.5px;top:668.61px;font-size:15px;color:#333">0</div>
<div class="t" style="left:1521.5px;top:668.61px;font-size:15px;color:#333">111</div>
<div class="t" style="left:1741.5px;top:668.61px;font-size:15px;color:#333">0</div>
<div class="t" style="left:752.0px;top:699.82px;font-size:15px;color:#333">陈源2</div>
<div class="t" style="left:861.5px;top:699.82px;font-size:15px;color:#333">1</div>
<div class="t" style="left:971.5px;top:699.82px;font-size:15px;color:#333">4</div>
<div class="t" style="left:1081.5px;top:699.82px;font-size:15px;color:#333">1</div>
<div class="t" style="left:1191.5px;top:699.82px;font-size:15px;color:#333">0</div>
<div class="t" style="left:1301.5px;top:699.82px;font-size:15px;color:#333">3</div>
<div class="t" style="left:1411.5px;top:699.82px;font-size:15px;color:#333">0</div>
<div class="t" style="left:1521.5px;top:699.82px;font-size:15px;color:#333">35</div>
<div class="t" style="left:1631.5px;top:699.82px;font-size:15px;color:#333">0.003</div>
<div class="t" style="left:1741.5px;top:699.82px;font-size:15px;color:#333">35</div>
<div class="t" style="left:752.0px;top:731.04px;font-size:15px;color:#333">刘生</div>
<div class="t" style="left:861.5px;top:731.04px;font-size:15px;color:#333">1</div>
<div class="t" style="left:971.5px;top:731.04px;font-size:15px;color:#333">2</div>
<div class="t" style="left:1081.5px;top:731.04px;font-size:15px;color:#333">0</div>
<div class="t" style="left:1191.5px;top:731.04px;font-size:15px;color:#333">1</div>
<div class="t" style="left:1301.5px;top:731.04px;font-size:15px;color:#333">1</div>
<div class="t" style="left:1411.5px;top:731.04px;font-size:15px;color:#333">0</div>
<div class="t" style="left:1521.5px;top:731.04px;font-size:15px;color:#333">300</div>
<div class="t" style="left:1631.5px;top:731.04px;font-size:15px;color:#333">0.0123</div>
<div class="t" style="left:1741.5px;top:731.04px;font-size:15px;color:#333">300</div>
<div class="t" style="left:752.0px;top:762.25px;font-size:15px;color:#333">天创供应链</div>
<div class="t" style="left:861.5px;top:762.25px;font-size:15px;color:#333">1</div>
<div class="t" style="left:971.5px;top:762.25px;font-size:15px;color:#333">2</div>
<div class="t" style="left:1081.5px;top:762.25px;font-size:15px;color:#333">1</div>
<div class="t" style="left:1191.5px;top:762.25px;font-size:15px;color:#333">1</div>
<div class="t" style="left:1301.5px;top:762.25px;font-size:15px;color:#333">0</div>
<div class="t" style="left:1411.5px;top:762.25px;font-size:15px;color:#333">0</div>
<div class="t" style="left:1521.5px;top:762.25px;font-size:15px;color:#333">0</div>
<div class="t" style="left:1631.5px;top:762.25px;font-size:15px;color:#333">1</div>
<div class="t" style="left:1741.5px;top:762.25px;font-size:15px;color:#333">0</div>
<div class="t" style="left:752.0px;top:793.46px;font-size:15px;color:#333">谢嘉仪</div>
<div class="t" style="left:861.5px;top:793.46px;font-size:15px;color:#333">1</div>
<div class="t" style="left:971.5px;top:793.46px;font-size:15px;color:#333">1</div>
<div class="t" style="left:1081.5px;top:793.46px;font-size:15px;color:#333">0</div>
<div class="t" style="left:1191.5px;top:793.46px;font-size:15px;color:#333">1</div>
<div class="t" style="left:1301.5px;top:793.46px;font-size:15px;color:#333">0</div>
<div class="t" style="left:1411.5px;top:793.46px;font-size:15px;color:#333">0</div>
<div class="t" style="left:1521.5px;top:793.46px;font-size:15px;color:#333">1111</div>
<div class="t" style="left:1741.5px;top:793.46px;font-size:15px;color:#333">666</div>
<div class="t" style="left:752.0px;top:824.68px;font-size:15px;color:#333">演示测试账号</div>
<div class="t" style="left:861.5px;top:824.68px;font-size:15px;color:#333">1</div>
<div class="t" style="left:971.5px;top:824.68px;font-size:15px;color:#333">1</div>
<div class="t" style="left:1081.5px;top:824.68px;font-size:15px;color:#333">0</div>
<div class="t" style="left:1191.5px;top:824.68px;font-size:15px;color:#333">0</div>
<div class="t" style="left:1301.5px;top:824.68px;font-size:15px;color:#333">1</div>
<div class="t" style="left:1411.5px;top:824.68px;font-size:15px;color:#333">0</div>
<div class="t" style="left:1521.5px;top:824.68px;font-size:15px;color:#333">0</div>
<div class="t" style="left:1741.5px;top:824.68px;font-size:15px;color:#333">0</div>
<div class="t" style="left:861.5px;top:855.89px;font-size:15px;color:#333">0</div>
<div class="t" style="left:971.5px;top:855.89px;font-size:15px;color:#333">0</div>
<div class="t" style="left:1081.5px;top:855.89px;font-size:15px;color:#333">0</div>
<div class="t" style="left:1191.5px;top:855.89px;font-size:15px;color:#333">0</div>
<div class="t" style="left:1301.5px;top:855.89px;font-size:15px;color:#333">0</div>
<div class="t" style="left:1411.5px;top:855.89px;font-size:15px;color:#333">0</div>
<div class="t" style="left:1521.5px;top:855.89px;font-size:15px;color:#333">102776.39</div>
<div class="t" style="left:1631.5px;top:855.89px;font-size:15px;color:#333">9.4945</div>
<div class="t" style="left:1741.5px;top:855.89px;font-size:15px;color:#333">72463.39</div>
<div class="a" style="left:195px;top:44px;width:16px;height:848px;background:linear-gradient(to right,rgba(0,0,0,0.21),rgba(0,0,0,0.145) 31%,rgba(0,0,0,0.09) 50%,rgba(0,0,0,0.035) 75%,rgba(0,0,0,0))"></div>
</body></html>
